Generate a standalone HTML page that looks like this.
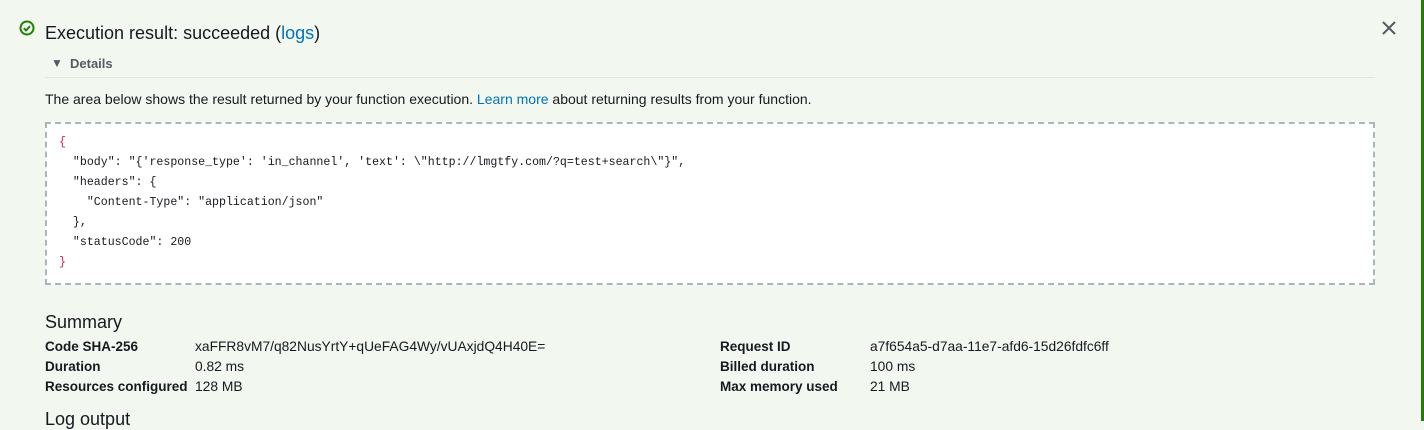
<!DOCTYPE html>
<html><head><meta charset="utf-8"><style>
body{margin:0;width:1424px;height:421px;overflow:hidden;background:#f2f8f0;font-family:"Liberation Sans",sans-serif;color:#16191f;position:relative}
.rb{position:absolute;right:0;top:0;width:3px;height:421px;background:#1d8102}
.abs{position:absolute;white-space:nowrap}
.code{position:absolute;left:45px;top:122px;width:1326px;height:159px;border:2px dashed #aab7b8;background:#fff;font-family:"Liberation Mono",monospace;font-size:11.6px;color:#16191f}
.code div{position:absolute;left:12px;white-space:pre}
.r{color:#c7254e}
.k{font-weight:bold;font-size:13.5px}
.v{font-size:13.8px}
</style></head><body>
<div class="rb"></div>
<svg class="abs" style="left:19px;top:20px" width="16" height="16" viewBox="0 0 16 16"><circle cx="8" cy="8" r="6.5" fill="none" stroke="#1d8102" stroke-width="2"/><path d="M4.8 8.2l2.2 2.2 4-4.2" fill="none" stroke="#1d8102" stroke-width="2"/></svg>
<div class="abs" style="left:45px;top:23px;font-size:18px">Execution result: succeeded (<span style="color:#0073bb">logs</span>)</div>
<svg class="abs" style="left:1382px;top:21px" width="14" height="14" viewBox="0 0 14 14"><path d="M1 1L13 13M13 1L1 13" stroke="#545b64" stroke-width="2"/></svg>
<div class="abs" style="left:51px;top:56px;font-size:12px;color:#545b64">▼</div>
<div class="abs" style="left:70px;top:56px;font-size:13px;font-weight:bold;color:#545b64">Details</div>
<div class="abs" style="left:45px;top:77px;width:1330px;height:1px;background:#e1e6e1"></div>
<div class="abs" style="left:45px;top:91px;font-size:14px">The area below shows the result returned by your function execution. <span style="color:#0073bb">Learn more</span> about returning results from your function.</div>
<div class="code">
<div class="r" style="top:12px">{</div>
<div style="top:32px">  "body": "{'response_type': 'in_channel', 'text': \"http://lmgtfy.com/?q=test+search\"}",</div>
<div style="top:52px">  "headers": {</div>
<div style="top:72px">    "Content-Type": "application/json"</div>
<div style="top:92px">  },</div>
<div style="top:112px">  "statusCode": 200</div>
<div class="r" style="top:132px">}</div>
</div>
<div class="abs" style="left:45px;top:312px;font-size:18px">Summary</div>
<div class="abs k" style="left:45px;top:339px">Code SHA-256</div>
<div class="abs v" style="left:195px;top:339px">xaFFR8vM7/q82NusYrtY+qUeFAG4Wy/vUAxjdQ4H40E=</div>
<div class="abs k" style="left:45px;top:359px">Duration</div>
<div class="abs v" style="left:195px;top:359px">0.82 ms</div>
<div class="abs k" style="left:45px;top:379px">Resources configured</div>
<div class="abs v" style="left:195px;top:379px">128 MB</div>
<div class="abs k" style="left:720px;top:339px">Request ID</div>
<div class="abs v" style="left:870px;top:339px">a7f654a5-d7aa-11e7-afd6-15d26fdfc6ff</div>
<div class="abs k" style="left:720px;top:359px">Billed duration</div>
<div class="abs v" style="left:870px;top:359px">100 ms</div>
<div class="abs k" style="left:720px;top:379px">Max memory used</div>
<div class="abs v" style="left:870px;top:379px">21 MB</div>
<div class="abs" style="left:45px;top:409px;font-size:18px">Log output</div>
</body></html>
